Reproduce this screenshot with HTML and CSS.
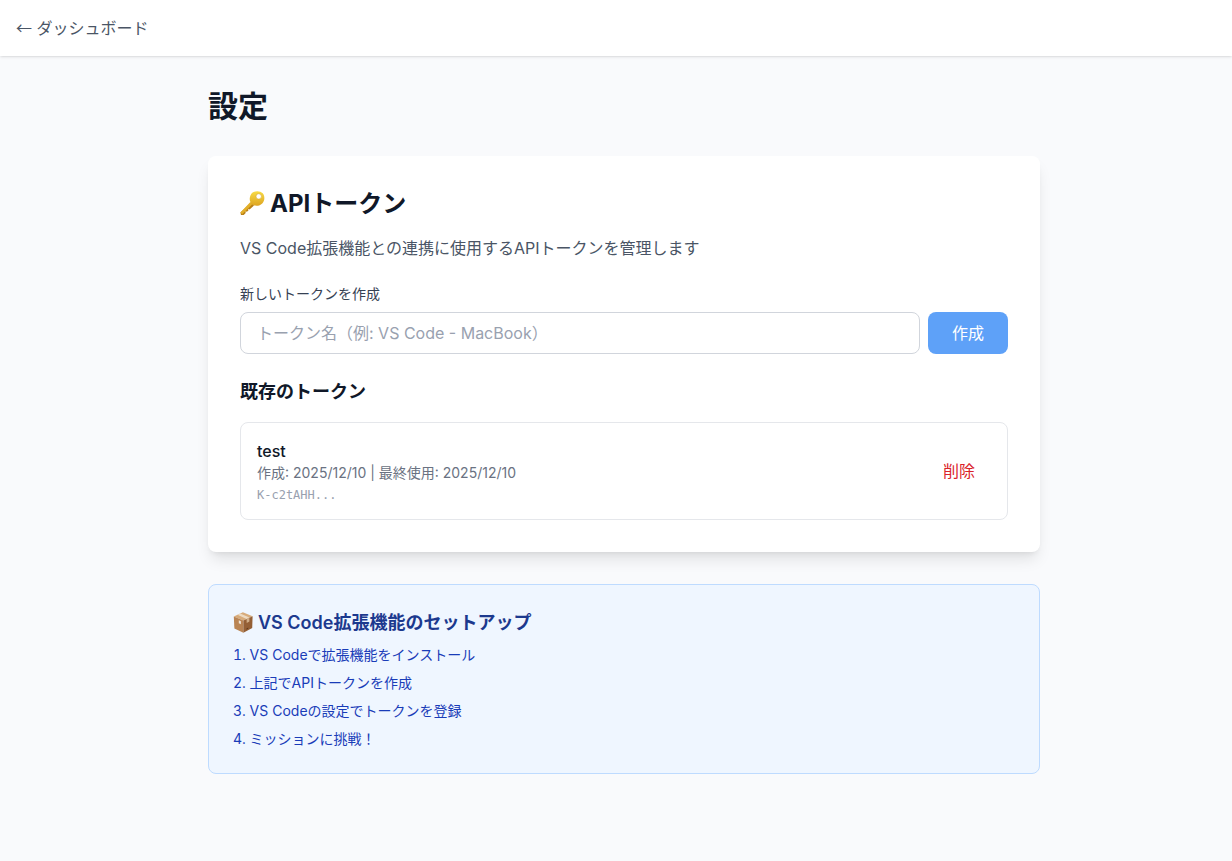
FILE: index.html
```html
<!DOCTYPE html>
<html lang="ja">
<head>
<meta charset="UTF-8">
<meta name="viewport" content="width=device-width, initial-scale=1">
<title>設定</title>
<link rel="stylesheet" href="styles.css">
</head>
<body>

<nav class="navbar">
  <a href="#" class="back-link"><span class="arrow">←</span> ダッシュボード</a>
</nav>

<main class="container">
  <h1>設定</h1>

  <section class="card">
    <h2 class="card-title">
      <svg class="icon-key" viewBox="0 1 25 26" aria-hidden="true">
        <defs>
          <linearGradient id="gold" x1="0" y1="0" x2="0" y2="1">
            <stop offset="0" stop-color="#f8dc45"/>
            <stop offset="1" stop-color="#dda422"/>
          </linearGradient>
        </defs>
        <path fill="#b97f16" d="M11 12.5 14 15.5 9.6 19.4 8.2 18.8 8.4 20.5 6.9 21.7 5.4 21.2 5.7 22.9 3.7 24.9 1 25 .4 22.6z"/>
        <path fill="#e3b02a" d="M10.4 12 12.6 14 2.2 24.2.5 22.4z"/>
        <path fill="url(#gold)" fill-rule="evenodd" d="M13 2.3C16 .5 20.4.8 22.7 3.3c2.4 2.7 2.1 7.3-.2 9.9-2.3 2.4-6.4 3.5-9.4 1.7-3.1-2-4-5.2-3-8.3C10.600 4.800 11.600 3.200 13 2.300zM18.700 3.700a2.700 2.700 0 1 0 .1 5.400 2.700 2.700 0 0 0-.1-5.400z"/>
        <circle cx="18.700" cy="6.400" r="2.700" fill="none" stroke="#d5a92c" stroke-width=".6"/>
      </svg>
      APIトークン
    </h2>
    <p class="description">VS Code拡張機能との連携に使用するAPIトークンを管理します</p>

    <form class="token-form">
      <label for="tokenName">新しいトークンを作成</label>
      <div class="form-row">
        <input type="text" id="tokenName" placeholder="トークン名（例: VS Code - MacBook）">
        <button type="button" class="btn-create">作成</button>
      </div>
    </form>

    <h3 class="list-title">既存のトークン</h3>
    <div class="token">
      <div>
        <p class="token-name">test</p>
        <p class="token-date">作成: 2025/12/10 | 最終使用: 2025/12/10</p>
        <p class="token-value">K-c2tAHH...</p>
      </div>
      <button type="button" class="btn-delete">削除</button>
    </div>
  </section>

  <section class="setup">
    <h3 class="setup-title">
      <svg class="icon-box" viewBox="0 0 20 22" aria-hidden="true">
        <path fill="#d7ab7b" d="M.8 4.500 9.900.3l9.700 3.900-9.200 4.200z"/>
        <path fill="#b98454" d="M.8 4.500 10.400 8.400V20.700L1.400 16.500z"/>
        <path fill="#945f35" d="M10.400 8.400 19.600 4.200 19.200 15.900 10.400 20.700z"/>
        <path fill="#eddac2" d="M4.500 2.800 7.200 1.600 16.400 5.500 13.600 6.900z"/>
        <path fill="#d1ad87" d="M13.600 6.900 16.400 5.600V9.500L13.700 10.900z"/>
        <path fill="#efe4d7" d="M5.800 8.300 7.900 9.200V12.200L5.800 11.300z"/>
        <path fill="#60391d" d="M13.500 16.400 15.200 15.500V16.800L13.500 17.700z"/>
      </svg>
      VS Code拡張機能のセットアップ
    </h3>
    <ol class="steps">
      <li>VS Codeで拡張機能をインストール</li>
      <li>上記でAPIトークンを作成</li>
      <li>VS Codeの設定でトークンを登録</li>
      <li>ミッションに挑戦！</li>
    </ol>
  </section>
</main>

</body>
</html>
```
FILE: styles.css
```css
* {
  box-sizing: border-box;
  margin: 0;
  padding: 0;
}

body {
  font-family: Inter, "Noto Sans CJK JP", sans-serif;
  font-size: 16px;
  line-height: 24px;
  color: #101828;
  background-color: #f9fafc;
}

input, button {
  font: inherit;
}

button {
  border: none;
  cursor: pointer;
}

.navbar {
  display: flex;
  padding: 16px;
  background-color: #fff;
  box-shadow: 0 1px 3px rgba(0, 0, 0, 0.1), 0 1px 2px -1px rgba(0, 0, 0, 0.1);
}

.back-link {
  color: #4a5565;
  text-decoration: none;
}

.back-link:hover {
  color: #101828;
}

.arrow {
  font-family: "Noto Sans CJK JP", sans-serif;
  line-height: 1;
}

.container {
  max-width: 896px;
  margin: 0 auto;
  padding: 32px 24px 32px 40px;
}

h1 {
  font-size: 30px;
  line-height: 36px;
  font-weight: 700;
  margin-bottom: 32px;
}

.card {
  padding: 32px;
  margin-bottom: 32px;
  background-color: #fff;
  border-radius: 8px;
  box-shadow: 0 10px 15px -3px rgba(0, 0, 0, 0.1), 0 4px 6px -4px rgba(0, 0, 0, 0.1);
}

.card-title {
  display: flex;
  align-items: center;
  gap: 5px;
  font-size: 24px;
  line-height: 32px;
  font-weight: 700;
  margin-bottom: 16px;
}

.icon-key {
  width: 25px;
  height: 26px;
}

.description {
  color: #4a5565;
  margin-bottom: 24px;
}

.token-form {
  margin-bottom: 24px;
}

.token-form label {
  display: block;
  font-size: 14px;
  line-height: 20px;
  color: #364153;
  margin-bottom: 8px;
}

.form-row {
  display: flex;
  gap: 8px;
}

.form-row input {
  flex: 1;
  min-width: 0;
  height: 42px;
  padding: 8px 16px;
  color: #101828;
  background-color: #fff;
  border: 1px solid #d1d5dc;
  border-radius: 8px;
}

.form-row input::placeholder {
  color: #99a1af;
}

.btn-create {
  padding: 8px 24px;
  color: #fff;
  background-color: #5ea1f8;
  border-radius: 8px;
}

.list-title {
  font-size: 18px;
  line-height: 28px;
  font-weight: 600;
  margin-bottom: 16px;
}

.token {
  display: flex;
  align-items: center;
  justify-content: space-between;
  padding: 16px;
  border: 1px solid #e5e7eb;
  border-radius: 8px;
}

.token-name {
  font-weight: 500;
}

.token-date {
  font-size: 14px;
  line-height: 20px;
  color: #6a7282;
}

.token-value {
  font-family: "DejaVu Sans Mono", monospace;
  font-size: 12px;
  line-height: 16px;
  color: #99a1af;
  margin-top: 4px;
}

.btn-delete {
  padding: 8px 16px;
  color: #da2229;
  background: none;
}

.setup {
  padding: 24px;
  background-color: #eff6ff;
  border: 1px solid #bedbff;
  border-radius: 8px;
}

.setup-title {
  display: flex;
  align-items: center;
  gap: 5px;
  font-size: 18px;
  line-height: 28px;
  font-weight: 600;
  color: #1c398e;
  margin-bottom: 8px;
}

.icon-box {
  width: 20px;
  height: 22px;
}

.steps {
  display: grid;
  gap: 8px;
  list-style-position: inside;
  font-size: 14px;
  line-height: 20px;
  color: #193cb8;
}
```
